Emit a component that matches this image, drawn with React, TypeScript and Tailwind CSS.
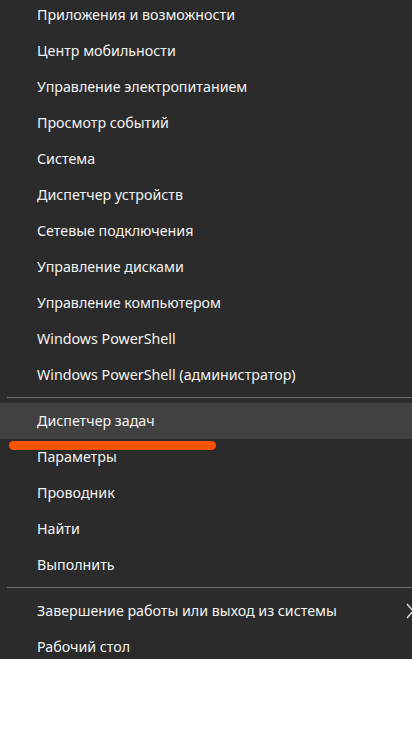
const groups: string[][] = [
  [
    'Приложения и возможности',
    'Центр мобильности',
    'Управление электропитанием',
    'Просмотр событий',
    'Система',
    'Диспетчер устройств',
    'Сетевые подключения',
    'Управление дисками',
    'Управление компьютером',
    'Windows PowerShell',
    'Windows PowerShell (администратор)',
  ],
  ['Диспетчер задач', 'Параметры', 'Проводник', 'Найти', 'Выполнить'],
  ['Завершение работы или выход из системы', 'Рабочий стол'],
];

const Separator = () => (
  <div className="h-[10px] pt-[4px] pl-[7px]">
    <div className="h-px bg-[#6f6f6f]" />
  </div>
);

export default function App() {
  return (
    <div
      className="w-[412px] min-h-[743px] bg-white"
      style={{ fontFamily: '"Noto Sans", "Open Sans", sans-serif' }}
    >
      <div className="relative h-[659px] overflow-hidden bg-[#2b2b2b]">
        <div className="-mt-[3px]">
          {groups.map((group, gi) => (
            <div key={gi}>
              {gi > 0 && <Separator />}
              {group.map((label) => {
                const active = label === 'Диспетчер задач';
                const hasSub = label.startsWith('Завершение');
                return (
                  <div
                    key={label}
                    className={`relative flex h-9 items-center pl-[37px] text-[14.25px] text-[#f2f2f2] ${
                      active ? 'bg-[#414141]' : ''
                    }`}
                  >
                    <span>{label}</span>
                    {hasSub && (
                      <svg
                        className="absolute left-[405px] top-[10px]"
                        width="10"
                        height="16"
                        viewBox="0 0 10 16"
                        fill="none"
                      >
                        <path d="M2 1l6 7-6 7" stroke="#e8e8e8" strokeWidth="1.3" />
                      </svg>
                    )}
                  </div>
                );
              })}
            </div>
          ))}
        </div>
        {/* orange marker under the highlighted item */}
        <div className="absolute left-[9px] top-[441px] h-[9px] w-[207px] rounded-full bg-[#fd5200]" />
      </div>
    </div>
  );
}
